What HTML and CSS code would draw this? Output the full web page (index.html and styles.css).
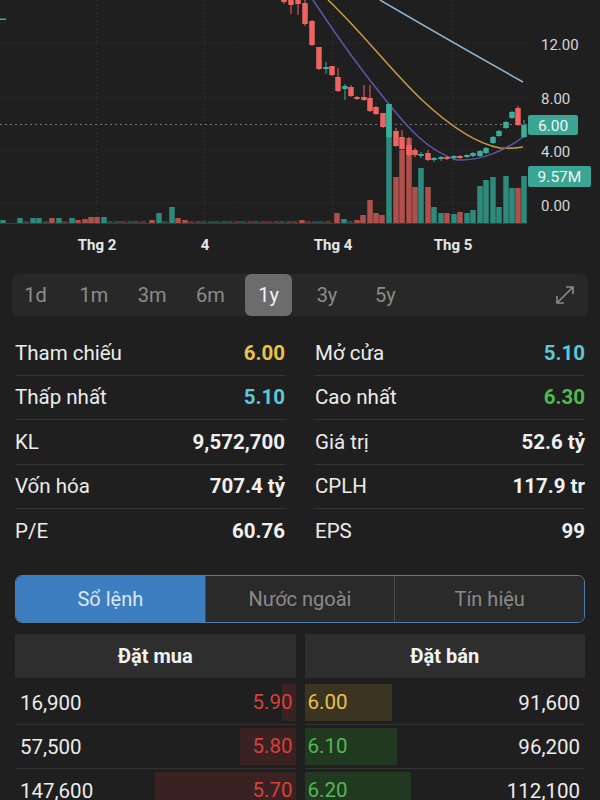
FILE: index.html
```html
<!DOCTYPE html>
<html>

<head>
    <title>Chi tiết cổ phiếu</title>
    <meta charset="utf-8">
    <meta name="viewport" content="width=device-width, initial-scale=1.0">
    <link rel="stylesheet" href="styles.css">
</head>

<body>

    <svg class="chart" width="600" height="262" viewBox="0 0 600 262">
        <g class="grid">
            <line x1="0" y1="43" x2="525" y2="43" />
            <line x1="0" y1="98" x2="525" y2="98" />
            <line x1="0" y1="150" x2="525" y2="150" />
            <line x1="0" y1="203" x2="525" y2="203" />
            <line x1="97" y1="0" x2="97" y2="223" />
            <line x1="205" y1="0" x2="205" y2="223" />
            <line x1="333" y1="0" x2="333" y2="223" />
            <line x1="453" y1="0" x2="453" y2="223" />
        </g>
        <line class="baseline" x1="0" y1="223.5" x2="527" y2="223.5" />
        <g id="volumer"></g>
        <line class="prisLinje" x1="0" y1="124.5" x2="527" y2="124.5" />
        <path class="ma ma-blaa" d="M380,0 Q445,38 523,82" />
        <path class="ma ma-gul" d="M328,0 C362,32 392,72 422,100 C452,128 478,144 500,148 C510,149 517,148 523,147" />
        <path class="ma ma-lilla" d="M313,0 C338,38 365,75 388,103 C408,128 428,151 457,160 C480,161 505,151 523,137" />
        <g id="lys"></g>
        <rect x="0" y="18.5" width="6" height="1.5" class="op" />

        <g class="akse">
            <text x="541" y="50">12.00</text>
            <text x="541" y="104">8.00</text>
            <text x="541" y="157">4.00</text>
            <text x="541" y="211">0.00</text>
        </g>
        <rect class="badge" x="528" y="115" width="50" height="20" rx="2" />
        <text class="badgeTekst" x="553" y="130.5">6.00</text>
        <rect class="badge" x="528" y="166" width="63" height="21" rx="2" />
        <text class="badgeTekst" x="559.5" y="182">9.57M</text>

        <g class="tid">
            <text x="97" y="250">Thg 2</text>
            <text x="205" y="250">4</text>
            <text x="333" y="250">Thg 4</text>
            <text x="453" y="250">Thg 5</text>
        </g>
    </svg>

    <nav class="perioder">
        <button class="periode">1d</button>
        <button class="periode">1m</button>
        <button class="periode">3m</button>
        <button class="periode">6m</button>
        <button class="periode valgt">1y</button>
        <button class="periode">3y</button>
        <button class="periode">5y</button>
        <button class="udvid" aria-label="Mở rộng">
            <svg width="22" height="22" viewBox="0 0 22 22">
                <path d="M3 19 L19 3 M12 3 H19 V10 M3 12 V19 H10" fill="none" stroke="#8c8c8c" stroke-width="1.6" />
            </svg>
        </button>
    </nav>

    <section class="stats">
        <div class="stat"><span>Tham chiếu</span><b class="gul">6.00</b></div>
        <div class="stat"><span>Mở cửa</span><b class="cyan">5.10</b></div>
        <div class="stat"><span>Thấp nhất</span><b class="cyan">5.10</b></div>
        <div class="stat"><span>Cao nhất</span><b class="groen">6.30</b></div>
        <div class="stat"><span>KL</span><b>9,572,700</b></div>
        <div class="stat"><span>Giá trị</span><b>52.6 tỷ</b></div>
        <div class="stat"><span>Vốn hóa</span><b>707.4 tỷ</b></div>
        <div class="stat"><span>CPLH</span><b>117.9 tr</b></div>
        <div class="stat"><span>P/E</span><b>60.76</b></div>
        <div class="stat"><span>EPS</span><b>99</b></div>
    </section>

    <nav class="faner">
        <button class="fane aktiv">Sổ lệnh</button>
        <button class="fane">Nước ngoài</button>
        <button class="fane">Tín hiệu</button>
    </nav>

    <section class="ordrebog">
        <div class="side">
            <h3>Đặt mua</h3>
            <div class="linje koeb"><span>16,900</span><b class="rod" style="width: 14px">5.90</b></div>
            <div class="linje koeb"><span>57,500</span><b class="rod" style="width: 56px">5.80</b></div>
            <div class="linje koeb"><span>147,600</span><b class="rod" style="width: 141px">5.70</b></div>
        </div>
        <div class="side">
            <h3>Đặt bán</h3>
            <div class="linje salg"><b class="gul" style="width: 87px">6.00</b><span>91,600</span></div>
            <div class="linje salg"><b class="groen" style="width: 92px">6.10</b><span>96,200</span></div>
            <div class="linje salg"><b class="groen" style="width: 106px">6.20</b><span>112,100</span></div>
        </div>
    </section>

    <script>
        // [x, top] - alle volumer slutter ved y 223
        const volumer = [
            [3, 220, "t"], [20, 218, "t"], [26, 221, "r"], [33, 218, "t"], [39, 218, "t"], [46, 221, "t"], [52, 218, "r"], [59, 218, "t"],
            [65, 221, "r"], [72, 218, "t"], [78, 220, "r"], [85, 219, "r"], [91, 217, "r"], [97, 217, "r"], [104, 217, "t"], [110, 221, "t"],
            [117, 221, "t"], [123, 221, "r"], [130, 221, "t"], [136, 221, "r"], [143, 221, "r"], [152, 220, "r"], [159, 213, "t"], [165, 221, "t"],
            [172, 207, "t"], [178, 218, "r"], [185, 220, "r"], [191, 221, "r"], [198, 221, "r"], [204, 221, "t"], [211, 221, "t"], [217, 221, "t"],
            [224, 221, "t"], [230, 221, "t"], [237, 221, "r"], [243, 221, "t"], [250, 221, "r"], [256, 221, "t"], [263, 221, "r"], [269, 221, "r"],
            [276, 221, "r"], [282, 221, "t"], [289, 221, "r"], [295, 221, "r"], [302, 220, "r"], [308, 221, "r"], [315, 221, "t"], [321, 221, "t"],
            [328, 221, "r"], [337, 213, "r"], [344, 219, "t"], [350, 221, "t"], [357, 220, "r"], [363, 215, "r"], [370, 200, "r"], [376, 213, "r"],
            [382, 215, "r"], [389, 104, "t"], [396, 177, "r"], [402, 150, "r"], [409, 138, "r"], [415, 187, "r"], [421, 168, "t"], [428, 187, "r"],
            [434, 207, "t"], [441, 213, "t"], [447, 213, "r"], [454, 214, "t"], [460, 212, "r"], [467, 213, "t"], [473, 210, "t"], [480, 186, "t"],
            [486, 180, "t"], [493, 177, "t"], [499, 207, "t"], [506, 176, "t"], [512, 188, "t"], [518, 188, "r"], [524, 176, "t"]
        ];

        // [x, krop top, krop bund, væge top, væge bund]
        const lys = [
            [284, -5, 2, -10, 4, "r"], [291, -3, 5, -8, 14, "r"], [298, -2, 4, -6, 15, "r"], [305, 3, 24, 0, 26, "r"],
            [312, 21, 45, 20, 46, "r"], [319, 47, 69, 47, 70, "r"], [326, 67, 69, 62, 74, "t"], [332, 66, 75, 66, 76, "r"],
            [338, 77, 91, 68, 92, "r"], [345, 86, 89, 84, 100, "t"], [351, 87, 96, 85, 97, "r"], [357, 97, 99, 96, 100, "r"],
            [364, 97, 100, 85, 101, "r"], [370, 98, 111, 85, 112, "r"], [376, 107, 114, 106, 115, "r"], [383, 113, 127, 113, 128, "r"],
            [389, 104, 137, 104, 138, "t"], [396, 131, 146, 128, 147, "r"], [402, 137, 149, 130, 150, "r"], [409, 145, 155, 137, 156, "r"],
            [415, 150, 155, 148, 157, "r"], [421, 154, 156, 152, 158, "t"], [428, 153, 160, 150, 161, "r"], [434, 158, 160, 157, 162, "t"],
            [441, 157, 159, 156, 161, "t"], [447, 157, 159, 156, 160, "r"], [454, 156, 158, 155, 160, "t"], [460, 156, 158, 155, 159, "r"],
            [467, 155, 157, 154, 158, "t"], [473, 153, 156, 152, 157, "t"], [480, 151, 156, 150, 157, "t"], [486, 148, 153, 147, 154, "t"],
            [493, 137, 143, 136, 144, "t"], [499, 131, 136, 130, 137, "t"], [506, 122, 128, 121, 129, "t"], [512, 112, 118, 111, 119, "t"],
            [518, 108, 125, 106, 126, "r"], [524, 125, 137, 120, 138, "t"]
        ];

        let volHtml = "";
        volumer.forEach(v => {
            const svag = 223 - v[1] <= 2 ? " svag" : "";
            volHtml += `<rect class="vol-${v[2]}${svag}" x="${v[0] - 2.75}" y="${v[1]}" width="5.5" height="${223 - v[1]}" />`;
        });
        document.querySelector("#volumer").innerHTML = volHtml;

        let lysHtml = "";
        lys.forEach(l => {
            const klasse = l[5] == "t" ? "op" : "ned";
            lysHtml += `<rect class="${klasse}" x="${l[0] - 0.5}" y="${l[3]}" width="1" height="${l[4] - l[3]}" />`;
            lysHtml += `<rect class="${klasse}" x="${l[0] - 2.75}" y="${l[1]}" width="5.5" height="${Math.max(l[2] - l[1], 1.5)}" />`;
        });
        document.querySelector("#lys").innerHTML = lysHtml;
    </script>
</body>

</html>
```

FILE: styles.css
```css
body {
    margin: 0;
    background-color: #1f1f1f;
    color: #ececec;
    font-family: Roboto, "Noto Sans", sans-serif;
}

button {
    font-family: inherit;
    border: none;
    background: none;
    cursor: pointer;
}

/* CHART */

.chart {
    display: block;
}

.grid line {
    stroke: #3a3a3a;
    stroke-width: 1;
    stroke-dasharray: 1 3;
}

.baseline {
    stroke: #3c3c3c;
    stroke-width: 1;
}

.prisLinje {
    stroke: #6f7f7a;
    stroke-width: 1;
    stroke-dasharray: 2 3;
}

.ma {
    fill: none;
    stroke-width: 1.5;
}

.ma-blaa {
    stroke: #93b4cf;
}

.ma-gul {
    stroke: #c99c45;
}

.ma-lilla {
    stroke: #5f57a8;
}

.op {
    fill: #3aae9a;
}

.ned {
    fill: #ee6462;
}

.vol-t {
    fill: #2d8a7d;
}

.vol-r {
    fill: #b0504c;
}

.svag {
    opacity: 0.45;
}

.akse text {
    fill: #d6d6d6;
    font-size: 15px;
}

.badge {
    fill: #3aa594;
}

.badgeTekst {
    fill: #f4f4f4;
    font-size: 15.5px;
    text-anchor: middle;
}

.tid text {
    fill: #e6e6e6;
    font-size: 15px;
    font-weight: bold;
    text-anchor: middle;
}

/* PERIODER */

.perioder {
    display: flex;
    align-items: center;
    gap: 11.3px;
    height: 42px;
    margin: 12px 12px 0;
    background-color: #282828;
    border-radius: 8px;
}

.periode {
    width: 47px;
    height: 42px;
    font-size: 20px;
    color: #8c8c8c;
    border-radius: 6px;
}

.periode.valgt {
    background-color: #6c6c6c;
    color: #f2f2f2;
}

.udvid {
    margin-left: auto;
    margin-right: 12px;
    padding: 0;
    height: 22px;
}

/* STATS */

.stats {
    display: grid;
    grid-template-columns: 1fr 1fr;
    column-gap: 30px;
    padding: 0 15px;
    margin-top: 15px;
}

.stat {
    display: flex;
    justify-content: space-between;
    align-items: center;
    height: 43.5px;
    border-bottom: 1px solid #353535;
    font-size: 20.5px;
}

.stat:nth-last-child(-n+2) {
    border-bottom: none;
}

.stat b {
    font-weight: bold;
    color: #f0f0f0;
}

.gul {
    color: #e8c24a !important;
}

.cyan {
    color: #5ac9d6 !important;
}

.groen {
    color: #4fbb4f !important;
}

.rod {
    color: #d8403c;
}

/* FANER */

.faner {
    display: flex;
    margin: 22px 15px 0;
    height: 48px;
    border: 1.5px solid #4b7dab;
    border-radius: 7px;
    overflow: hidden;
    box-sizing: border-box;
}

.fane {
    flex: 1;
    padding-top: 2px;
    font-size: 20px;
    color: #8a8a8a;
    background-color: #2a2a2a;
    border-left: 1px solid #4a4a4a;
}

.fane:first-child {
    border-left: none;
}

.fane.aktiv {
    background-color: #3c7ebf;
    color: #dbe8f5;
}

/* ORDREBOG */

.ordrebog {
    display: grid;
    grid-template-columns: 1fr 1fr;
    column-gap: 9px;
    padding: 0 15px;
    margin-top: 11px;
}

.side h3 {
    margin: 0 0 3px;
    height: 44px;
    line-height: 44px;
    text-align: center;
    font-size: 20px;
    font-weight: bold;
    color: #f2f2f2;
    background-color: #2e2e2e;
}

.linje {
    display: flex;
    justify-content: space-between;
    align-items: center;
    height: 42px;
    padding-top: 1px;
    border-bottom: 1px solid #333;
    font-size: 20.5px;
}

.linje b {
    font-weight: normal;
    height: 37px;
    line-height: 37px;
    box-sizing: border-box;
}

.koeb span {
    padding-left: 5px;
}

.koeb b {
    text-align: right;
    background-color: #3a2222;
    white-space: nowrap;
    direction: rtl;
    overflow: visible;
}

.koeb b.rod {
    padding-right: 3px;
    min-width: 0;
}

.salg b {
    padding-left: 3px;
    white-space: nowrap;
}

.salg b.gul {
    background-color: #3a3421;
}

.salg b.groen {
    background-color: #213920;
}

.salg span {
    padding-right: 5px;
}
```
